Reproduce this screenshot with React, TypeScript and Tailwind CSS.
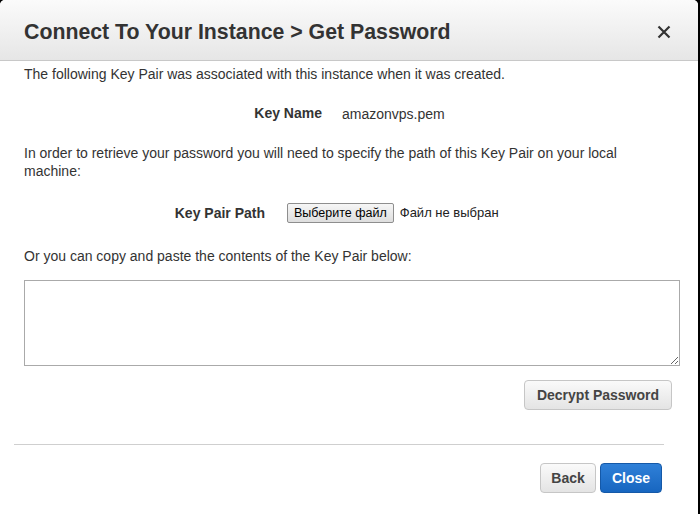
export default function App() {
  return (
    <div className="w-[700px] h-[514px] bg-black overflow-hidden" style={{ fontFamily: '"Liberation Sans", Arial, sans-serif' }}>
      <div className="w-[698px] h-[514px] bg-white rounded-t-[5px] flex flex-col">
        {/* Header */}
        <div className="h-[61px] shrink-0 flex items-center justify-between pl-6 pr-[27px] rounded-t-[5px] bg-gradient-to-b from-[#fbfbfb] to-[#e6e6e6] border-b border-[#c8c8c8]">
          <h1 className="text-[21.3px] font-bold text-[#333] pt-[5px]">Connect To Your Instance &gt; Get Password</h1>
          <svg width="14" height="14" viewBox="0 0 14 14" className="mt-[4px]">
            <path d="M1.5 1.5 L12.5 12.5 M12.5 1.5 L1.5 12.5" stroke="#333" strokeWidth="2.2" />
          </svg>
        </div>

        {/* Body */}
        <div className="px-6 pt-[4px] text-[14px] text-[#333] leading-[18px]">
          <p>The following Key Pair was associated with this instance when it was created.</p>

          <div className="flex items-center mt-[19px]">
            <span className="w-[298px] text-right font-bold">Key Name</span>
            <span className="ml-5 mt-[3px]">amazonvps.pem</span>
          </div>

          <p className="mt-[21px]">In order to retrieve your password you will need to specify the path of this Key Pair on your local machine:</p>

          <div className="flex items-center mt-[23px]">
            <span className="w-[241px] text-right font-bold">Key Pair Path</span>
            <button className="ml-[22px] h-[20px] px-[6px] text-[12.5px] text-black border border-[#8e8e8e] rounded-[2px] bg-gradient-to-b from-[#f6f6f6] to-[#dedede] leading-none">
              Выберите файл
            </button>
            <span className="ml-[6px] text-[13px] text-[#222]">Файл не выбран</span>
          </div>

          <p className="mt-[24px]">Or you can copy and paste the contents of the Key Pair below:</p>

          <textarea className="mt-[15px] block w-[656px] h-[86px] border border-[#aaa] bg-white resize-y" />

          <div className="flex justify-end mt-[14px] pr-[2px]">
            <button className="h-[30px] w-[148px] rounded-[4px] border border-[#c6c6c6] bg-gradient-to-b from-[#fafafa] to-[#e4e4e4] text-[14px] font-bold text-[#444]">
              Decrypt Password
            </button>
          </div>
        </div>

        <div className="mx-[14px] w-[650px] mt-[34px] border-t border-[#cfcfcf]" />

        <div className="flex justify-end gap-[4px] pr-[36px] mt-[18px]">
          <button className="h-[30px] w-[56px] rounded-[4px] border border-[#c6c6c6] bg-gradient-to-b from-[#fafafa] to-[#e4e4e4] text-[14px] font-bold text-[#444]">
            Back
          </button>
          <button className="h-[30px] w-[62px] rounded-[4px] border border-[#1559a8] bg-gradient-to-b from-[#2f80d8] to-[#1766c0] text-[14px] font-bold text-white">
            Close
          </button>
        </div>
      </div>
    </div>
  );
}
